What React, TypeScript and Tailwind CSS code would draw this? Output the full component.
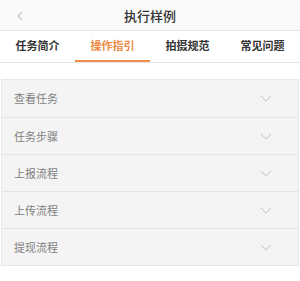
import React, { useState } from "react";

const tabs = ["任务简介", "操作指引", "拍摄规范", "常见问题"];
const items = ["查看任务", "任务步骤", "上报流程", "上传流程", "提现流程"];

const Chevron = () => (
  <svg width="12" height="7" viewBox="0 0 12 7" fill="none">
    <path d="M1 1l5 5 5-5" stroke="#d2d2d2" strokeWidth="1.1" />
  </svg>
);

const App = () => {
  const [active, setActive] = useState(1);

  return (
    <div
      className="w-[300px] h-[281px] bg-white overflow-hidden"
      style={{ fontFamily: '"Noto Sans CJK SC", "Noto Sans", sans-serif' }}
    >
      <div className="relative h-[31px] bg-[#f9f9f9] border-b border-[#e4e4e4] flex items-center justify-center">
        <svg className="absolute left-[17px] top-[11px]" width="6" height="10" viewBox="0 0 6 10" fill="none">
          <path d="M5 1L1 5l4 4" stroke="#c8c8c8" strokeWidth="1.2" />
        </svg>
        <span className="text-[13px] font-medium text-[#333] leading-none">执行样例</span>
      </div>
      <div className="h-[32px] flex border-b border-[#e6e6e6] bg-white">
        {tabs.map((t, i) => (
          <button
            key={t}
            onClick={() => setActive(i)}
            className={
              "flex-1 relative flex items-center justify-center text-[11px] font-bold leading-none " +
              (i === active ? "text-[#ec8c48]" : "text-[#333]")
            }
          >
            <span className="-mt-[2px]">{t}</span>
            {i === active && (
              <span className="absolute left-0 right-0 bottom-0 h-[2px] bg-[#ec8c48]" />
            )}
          </button>
        ))}
      </div>
      <div className="mt-[16px] mx-[1px] border border-[#e8e8e8] bg-[#f4f4f4]">
        {items.map((it, i) => (
          <div
            key={it}
            className={
              "h-[37px] flex items-center justify-between pl-[12px] pr-[26px] " +
              (i > 0 ? "border-t border-[#e4e4e4]" : "")
            }
          >
            <span className="text-[11px] text-[#808080] leading-none">{it}</span>
            <Chevron />
          </div>
        ))}
      </div>
    </div>
  );
};

export default App;
